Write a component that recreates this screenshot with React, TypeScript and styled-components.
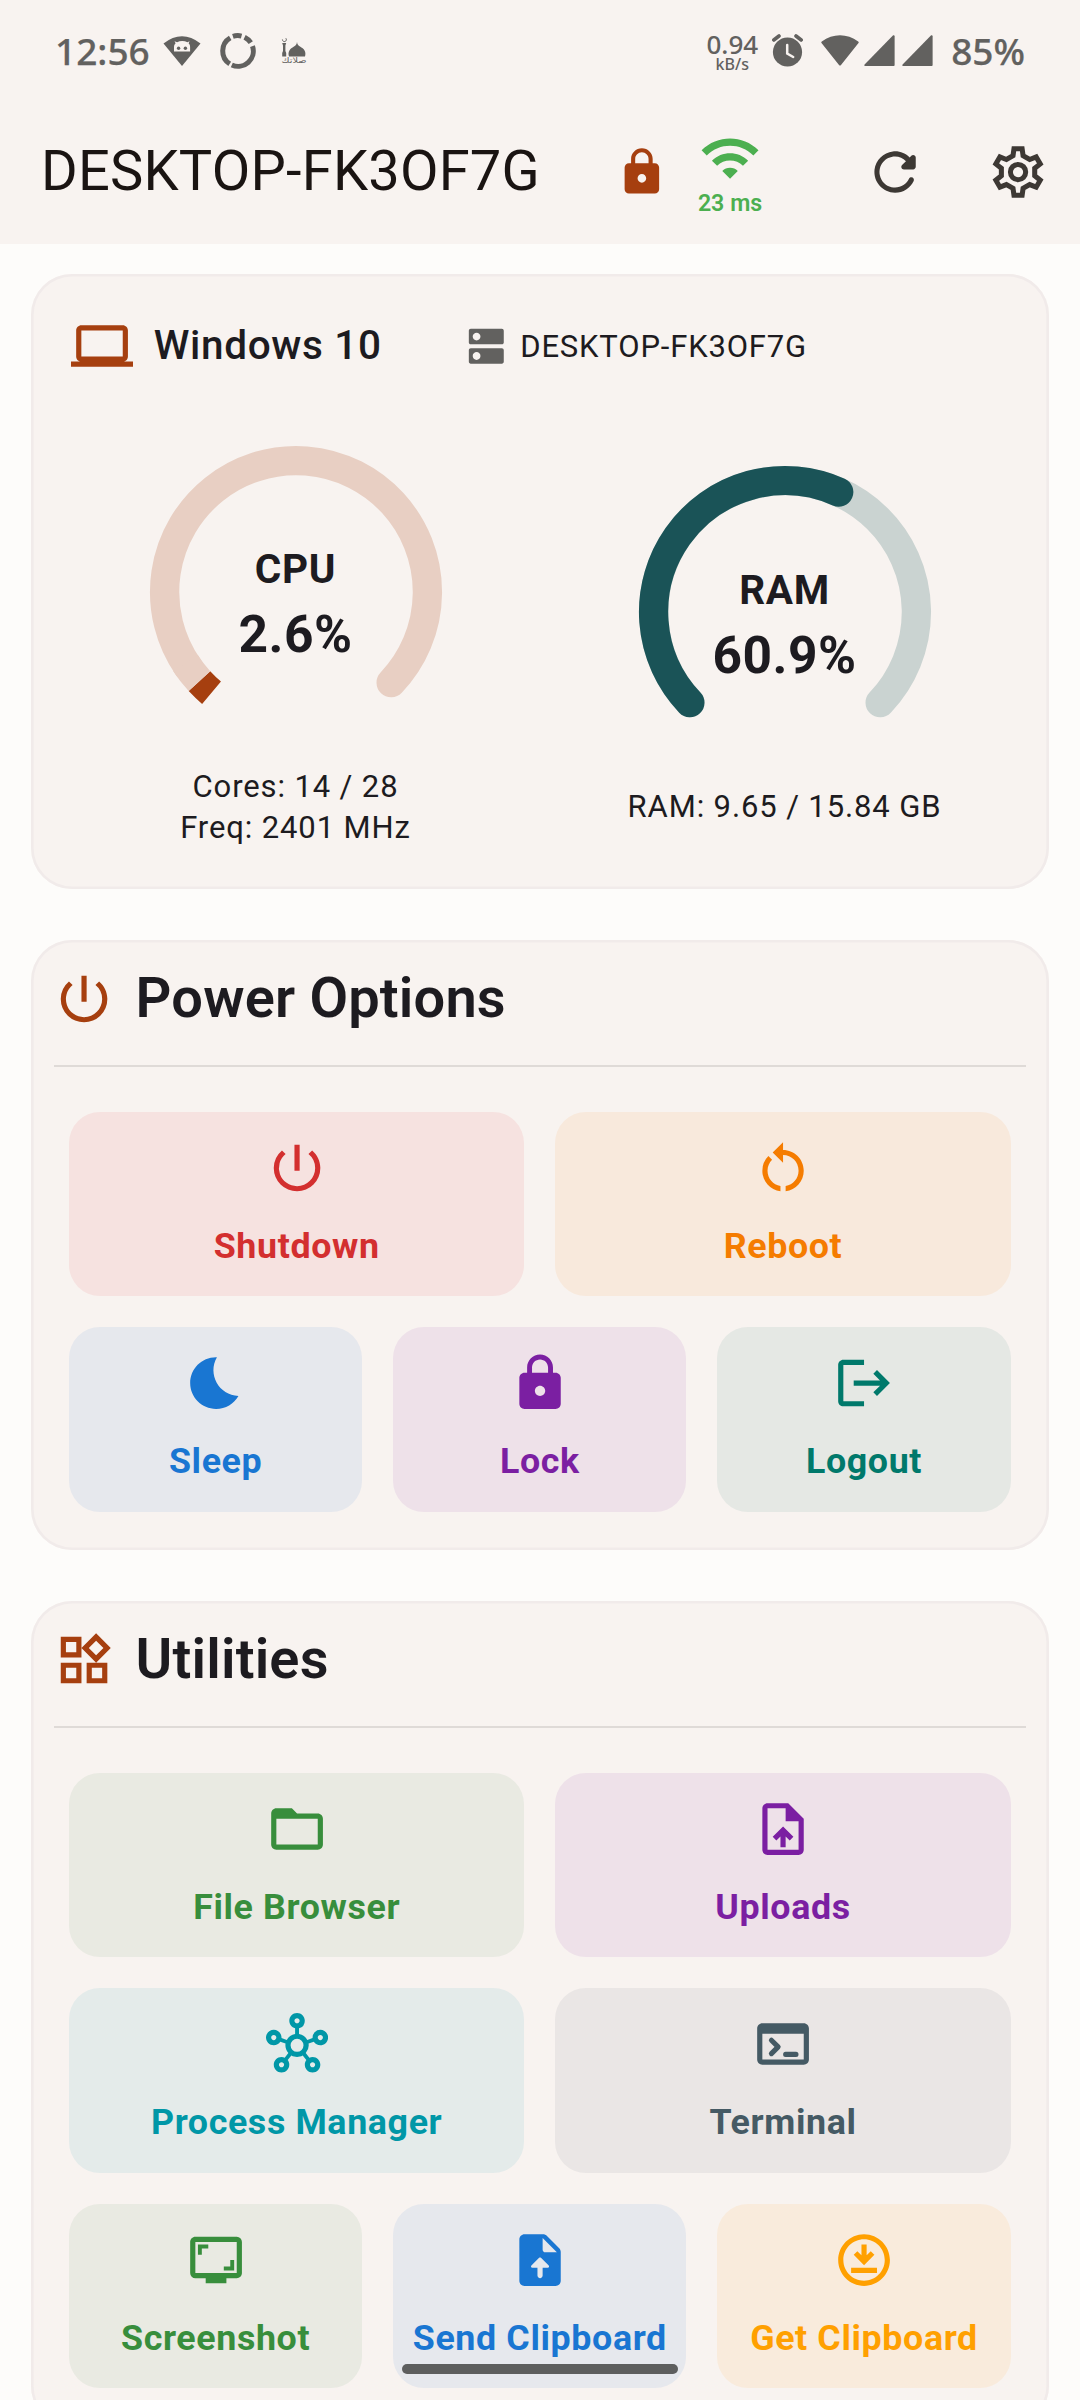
import React from "react";
import styled, { createGlobalStyle } from "styled-components";
import {
  MdBedtime,
  MdDns,
  MdFolderOpen,
  MdLaptop,
  MdLock,
  MdLogout,
  MdOutlineDownloadForOffline,
  MdOutlineHub,
  MdOutlineWidgets,
  MdPowerSettingsNew,
  MdRestartAlt,
  MdScreenshotMonitor,
  MdUploadFile,
  MdWifi,
} from "react-icons/md";

const color = {
  page: "#fdfcfa",
  surface: "#f8f3f0",
  outline: "#f1ebea",
  divider: "#dfdad7",
  text: "#1d1b20",
  title: "#1a1412",
  status: "#62615f",
  accent: "#a63f0f",
  action: "#3d3834",
  online: "#4caf50",
};

const GlobalStyle = createGlobalStyle`
  * { box-sizing: border-box; }
  html, body { margin: 0; padding: 0; background: ${color.page}; }
  body { font-family: Roboto, "Liberation Sans", sans-serif; color: ${color.text}; }
  svg { display: block; flex: none; }
`;

const Screen = styled.div`
  position: relative;
  width: 1080px;
  height: 2400px;
  overflow: hidden;
  background: ${color.page};
`;

/* ---------- status bar ---------- */

const StatusBar = styled.div`
  display: flex;
  align-items: center;
  height: 100px;
  padding: 1px 55px 0 55px;
  background: ${color.surface};
  color: ${color.status};
  font-family: "Noto Sans", Roboto, sans-serif;
`;

const StatusText = styled.span<{ $ml?: number }>`
  margin-left: ${(p) => p.$ml ?? 0}px;
  font-size: 37px;
  font-weight: 500;
  line-height: 50px;
  white-space: nowrap;
  -webkit-text-stroke: 0.25px ${color.status};
`;

const StatusIcon = styled.svg<{ $ml: number }>`
  margin-left: ${(p) => p.$ml}px;
`;

const Spacer = styled.div`
  flex: 1;
`;

const NetSpeed = styled.div`
  display: flex;
  flex-direction: column;
  align-items: center;
  padding-top: 4px;
`;

const SpeedValue = styled.span`
  font-size: 26px;
  font-weight: 500;
  line-height: 23px;
`;

const SpeedUnit = styled.span`
  font-size: 16px;
  font-weight: 500;
  line-height: 16px;
`;

/* ---------- app bar ---------- */

const AppBar = styled.header`
  display: flex;
  align-items: center;
  height: 144px;
  padding: 0 30.8px 0 41px;
  background: ${color.surface};
`;

const HostTitle = styled.h1`
  margin: 0 auto 2px 0;
  color: ${color.title};
  font-size: 56px;
  font-weight: 400;
  line-height: 66px;
  letter-spacing: 0.22px;
  white-space: nowrap;
`;

const Action = styled.div<{ $gap: number; $color: string }>`
  display: flex;
  margin-left: ${(p) => p.$gap}px;
  color: ${(p) => p.$color};
`;

const Ping = styled.div`
  display: flex;
  flex-direction: column;
  align-items: center;
  width: 64px;
  margin-left: 30px;
  color: ${color.online};
`;

const PingText = styled.span`
  font-size: 23.2px;
  font-weight: 600;
  line-height: 28px;
  white-space: nowrap;
`;

/* ---------- cards ---------- */

const Content = styled.main`
  display: flex;
  flex-direction: column;
  gap: 51.1px;
  padding: 30.4px 31px 0;
`;

const Card = styled.section<{ $height?: number }>`
  display: flex;
  flex-direction: column;
  ${(p) => (p.$height ? `height: ${p.$height}px;` : "")}
  border-radius: 41px;
  background: ${color.surface};
  box-shadow: inset 0 0 0 2.6px ${color.outline};
`;

const SystemRow = styled.div`
  display: flex;
  align-items: center;
  height: 62px;
  margin: 40.8px 40px 0;
`;

const OsName = styled.span`
  width: 309.5px;
  margin: 0 0 2px 20.7px;
  font-size: 40.5px;
  font-weight: 500;
  line-height: 52px;
  letter-spacing: 0.65px;
`;

const HostName = styled.span`
  margin-left: 10.4px;
  font-size: 31px;
  line-height: 41px;
  letter-spacing: 0.82px;
`;

const Gauges = styled.div`
  display: flex;
  align-items: center;
  margin: 64.7px 20px 0;
`;

const GaugeColumn = styled.div`
  display: flex;
  flex: 1;
  flex-direction: column;
  align-items: center;
`;

const GaugeFace = styled.div`
  display: grid;
  width: 300px;
  height: 324px;

  > * {
    grid-area: 1 / 1;
  }
`;

const GaugeLabel = styled.div`
  display: flex;
  flex-direction: column;
  align-items: center;
  padding-top: 97.4px;
`;

const GaugeName = styled.span`
  font-size: 40.5px;
  font-weight: 700;
  line-height: 60px;
  letter-spacing: 0.7px;
`;

const GaugeValue = styled.span`
  font-size: 51.5px;
  font-weight: 700;
  line-height: 71px;
  letter-spacing: 0.5px;
`;

const GaugeLine = styled.span`
  font-size: 31px;
  line-height: 41.2px;
  letter-spacing: 0.88px;
  white-space: nowrap;
`;

/* ---------- tile groups ---------- */

const GroupHeader = styled.div`
  display: flex;
  align-items: center;
  height: 124.4px;
  margin: 0 22.3px;
  padding-bottom: 6.4px;
  color: ${color.accent};
`;

const GroupTitle = styled.h2`
  margin: 0 0 3px 20.2px;
  color: ${color.text};
  font-size: 56px;
  font-weight: 600;
  line-height: 62px;
  letter-spacing: 0.17px;
`;

const Divider = styled.div`
  height: 2px;
  margin: 0 22.8px;
  background: ${color.divider};
`;

const TileRows = styled.div`
  display: flex;
  flex-direction: column;
  gap: 31px;
  padding: 45.1px 38.4px 38.4px 38px;
`;

const TileRow = styled.div`
  display: flex;
  gap: 31px;
`;

const Tile = styled.button<{ $fg: string; $bg: string }>`
  display: flex;
  flex: 1 1 0;
  flex-direction: column;
  align-items: center;
  gap: 21px;
  min-width: 0;
  height: 184.5px;
  padding: 25px 0 0;
  border: 0;
  border-radius: 31px;
  background: ${(p) => p.$bg};
  color: ${(p) => p.$fg};
  font-family: inherit;
`;

const TileLabel = styled.span`
  font-size: 35.8px;
  font-weight: 700;
  line-height: 52px;
  letter-spacing: 0.62px;
  white-space: nowrap;
`;

const HomeIndicator = styled.div`
  position: absolute;
  left: 402px;
  top: 2364px;
  width: 276px;
  height: 10px;
  border-radius: 5px;
  background: #5d5e5e;
`;

/* ---------- drawings ---------- */

const ICON = 62.1;

const RefreshIcon = () => (
  <svg width={ICON} height={ICON} viewBox="0 0 24 24" fill="currentColor">
    <path d="M17.65 6.35c-1.63-1.63-3.94-2.57-6.48-2.31-3.67.37-6.69 3.35-7.1 7.02C3.52 15.91 7.27 20 12 20c3.19 0 5.93-1.87 7.21-4.56.32-.67-.16-1.44-.9-1.44-.37 0-.72.2-.88.53-1.13 2.43-3.84 3.97-6.8 3.31-2.22-.49-4.01-2.3-4.48-4.52C5.31 9.44 8.26 6 12 6c1.66 0 3.14.69 4.22 1.78l-1.51 1.51c-.63.63-.19 1.71.7 1.71H19c.55 0 1-.45 1-1V6.41c0-.89-1.08-1.34-1.71-.71l-.64.65z" />
  </svg>
);

/* Centre line of one gear tooth, repeated six times around the hub. */
const TOOTH = [
  [-1.945, -6.315],
  [-1.57, -9],
  [1.57, -9],
  [1.945, -6.315],
];

const gearPoints = [0, 60, 120, 180, 240, 300]
  .flatMap((deg) => {
    const rad = (deg * Math.PI) / 180;
    return TOOTH.map(([x, y]) => {
      const px = 12 + x * Math.cos(rad) - y * Math.sin(rad);
      const py = 12 + x * Math.sin(rad) + y * Math.cos(rad);
      return `${px.toFixed(3)},${py.toFixed(3)}`;
    });
  })
  .join(" ");

const SettingsIcon = () => (
  <svg width={ICON} height={ICON} viewBox="0 0 24 24" fill="none" stroke="currentColor" strokeWidth="1.95">
    <polygon points={gearPoints} />
    <circle cx="12" cy="12" r="2.95" />
  </svg>
);

const TerminalIcon = ({ size }: { size: number }) => (
  <svg width={size} height={size} viewBox="0 0 24 24" fill="currentColor">
    <path d="M20 4H4c-1.11 0-2 .9-2 2v12c0 1.1.89 2 2 2h16c1.1 0 2-.9 2-2V6c0-1.1-.89-2-2-2zm0 14H4V8h16v10z" />
    <path
      d="M7.5 10.5l2.6 2.6-2.6 2.6M13 16h4"
      fill="none"
      stroke="currentColor"
      strokeWidth="1.95"
      strokeLinecap="round"
      strokeLinejoin="round"
    />
  </svg>
);

const SendFileIcon = ({ size }: { size: number }) => (
  <svg width={size} height={size} viewBox="0 0 24 24" fill="currentColor" fillRule="evenodd">
    <path d="M14.59 2.59c-.38-.38-.89-.59-1.42-.59H6c-1.1 0-2 .9-2 2v16c0 1.1.89 2 1.99 2H18c1.1 0 2-.9 2-2V8.83c0-.53-.21-1.04-.59-1.41l-4.82-4.83zM15 15h-2v3c0 .55-.45 1-1 1s-1-.45-1-1v-3H9c-.45 0-.66-.54-.35-.85l2.99-3c.2-.2.51-.2.71 0l3.01 3c.3.31.08.85-.36.85zM14 9c-.55 0-1-.45-1-1V3.500L18.500 9H14z" />
  </svg>
);

const CatWifiIcon = () => (
  <StatusIcon $ml={13} width="38" height="30" viewBox="0 0 38 30">
    <path d="M0.500 7.500Q19-7 37.500 7.500L19 30z" fill={color.status} />
    <path
      d="M11 15.500V11c0-1.800 .8-2.900 1.600-3.800L11.500 5.200l2.600 1c3-1.500 7.300-1.500 10.300 0l2.200-1-1 2c.9 .9 1.500 2 1.500 3.800v4.500z"
      fill={color.surface}
    />
    <circle cx="15.600" cy="12.300" r="1.700" fill={color.status} />
    <circle cx="22.400" cy="12.300" r="1.700" fill={color.status} />
  </StatusIcon>
);

const RingIcon = () => (
  <StatusIcon $ml={19} width="36" height="36" viewBox="0 0 36 36" fill="none" stroke={color.status} strokeWidth="5">
    <path d="M12.900 3.400A15.300 15.300 0 0 1 21.500 3.100" />
    <path d="M24.600 4.200A15.300 15.300 0 0 1 30.800 9.700" />
    <path d="M32.500 13.100A15.300 15.300 0 0 1 11.800 32" />
    <path d="M9.700 30.900A15.300 15.300 0 0 1 10.200 4.900" />
  </StatusIcon>
);

const MosqueIcon = () => (
  <StatusIcon $ml={25} width="27" height="28" viewBox="0 0 27 28" fill={color.status}>
    <path d="M8 19.500C6.500 14.500 9 11.800 13 9.500 14.800 8.500 15.600 7.600 16 5c.4 2.600 1.200 3.500 3 4.500 4 2.300 6.500 5 5 10z" />
    <path d="M1.200 19.500V16l.8-2V8.500L1.200 6h4L4.400 8.500V14l.8 2v3.500z" />
    <path d="M4.800 1.200A2 2 0 1 1 1.400 2.400" fill="none" stroke={color.status} strokeWidth=".9" />
    <text x="0.500" y="25.500" fontSize="8" fontFamily="DejaVu Sans, sans-serif" textLength="25" lengthAdjust="spacingAndGlyphs">
      صلاتك
    </text>
  </StatusIcon>
);

const AlarmIcon = () => (
  <StatusIcon $ml={14} width="31" height="33" viewBox="0 0 31 33">
    <circle cx="15.500" cy="18" r="14.600" fill={color.status} />
    <path d="M1.800 6L7 2M24 2l5.200 4" stroke={color.status} strokeWidth="3.600" strokeLinecap="round" />
    <path d="M15.200 11v8.600l6 3.400" fill="none" stroke={color.surface} strokeWidth="2.500" strokeLinecap="round" />
  </StatusIcon>
);

const WifiFullIcon = () => (
  <StatusIcon $ml={18} width="38" height="31" viewBox="0 0 38 31" fill={color.status}>
    <path d="M.8 6.500C12-1.700 26-1.700 37.200 6.500c.7 .5 .7 1 .3 1.600L20 29.900c-.6 .8-1.400 .8-2 0L.5 8.100C.1 7.500 .1 7 .8 6.500z" />
  </StatusIcon>
);

const SignalIcon = ({ ml }: { ml: number }) => (
  <StatusIcon $ml={ml} width="31" height="31" viewBox="0 0 31 31" fill={color.status}>
    <path d="M28.900 .6 .6 29.500c-.6 .8-.4 1.500 .5 1.500h28.400c.7 0 1.100-.4 1.100-1.100V1.300C30.600 .1 29.700-.2 28.900 .6z" />
  </StatusIcon>
);

/* The dial spans 280 degrees, its round caps included. */
const DIAL = { center: 150, radius: 131.4, width: 29.3, start: 130, sweep: 280, cap: 6.4 };

function arc(from: number, to: number) {
  const point = (deg: number) => {
    const rad = (deg * Math.PI) / 180;
    const x = DIAL.center + DIAL.radius * Math.cos(rad);
    const y = DIAL.center + DIAL.radius * Math.sin(rad);
    return `${x.toFixed(2)} ${y.toFixed(2)}`;
  };
  const large = to - from > 180 ? 1 : 0;
  return `M${point(from)}A${DIAL.radius} ${DIAL.radius} 0 ${large} 1 ${point(to)}`;
}

interface GaugeProps {
  name: string;
  percent: number;
  fill: string;
  track: string;
  lines: string[];
}

function Gauge({ name, percent, fill, track, lines }: GaugeProps) {
  const end = DIAL.start + (DIAL.sweep * percent) / 100;
  const isShort = end - DIAL.start < DIAL.cap * 2;
  const trackEnd = DIAL.start + DIAL.sweep - DIAL.cap;
  return (
    <GaugeColumn>
      <GaugeFace>
        <svg width="300" height="300" viewBox="0 0 300 300" fill="none" strokeWidth={DIAL.width}>
          <path d={arc(isShort ? end + 8 : DIAL.start + DIAL.cap, trackEnd)} stroke={track} strokeLinecap="round" />
          {isShort ? (
            <path d={arc(DIAL.start, end)} stroke={fill} />
          ) : (
            <path d={arc(DIAL.start + DIAL.cap, end - DIAL.cap)} stroke={fill} strokeLinecap="round" />
          )}
          {isShort && <path d={arc(end, end + 10)} stroke={track} />}
        </svg>
        <GaugeLabel>
          <GaugeName>{name}</GaugeName>
          <GaugeValue>{percent}%</GaugeValue>
        </GaugeLabel>
      </GaugeFace>
      {lines.map((line) => (
        <GaugeLine key={line}>{line}</GaugeLine>
      ))}
    </GaugeColumn>
  );
}

interface TileSpec {
  label: string;
  icon: React.ComponentType<{ size: number }>;
  fg: string;
  bg: string;
}

const red = { fg: "#d32f2f", bg: "#f6e2e0" };
const orange = { fg: "#f57c00", bg: "#f8e9dc" };
const blue = { fg: "#1976d2", bg: "#e6e8ed" };
const purple = { fg: "#7b1fa2", bg: "#eee1e9" };
const teal = { fg: "#00796b", bg: "#e5e8e4" };
const green = { fg: "#388e3c", bg: "#e9eae2" };
const cyan = { fg: "#0097a7", bg: "#e4ebea" };
const slate = { fg: "#455a64", bg: "#eae6e5" };
const amber = { fg: "#ffa000", bg: "#f9ebdc" };

const powerTiles: TileSpec[][] = [
  [
    { label: "Shutdown", icon: MdPowerSettingsNew, ...red },
    { label: "Reboot", icon: MdRestartAlt, ...orange },
  ],
  [
    { label: "Sleep", icon: MdBedtime, ...blue },
    { label: "Lock", icon: MdLock, ...purple },
    { label: "Logout", icon: MdLogout, ...teal },
  ],
];

const utilityTiles: TileSpec[][] = [
  [
    { label: "File Browser", icon: MdFolderOpen, ...green },
    { label: "Uploads", icon: MdUploadFile, ...purple },
  ],
  [
    { label: "Process Manager", icon: MdOutlineHub, ...cyan },
    { label: "Terminal", icon: TerminalIcon, ...slate },
  ],
  [
    { label: "Screenshot", icon: MdScreenshotMonitor, ...green },
    { label: "Send Clipboard", icon: SendFileIcon, ...blue },
    { label: "Get Clipboard", icon: MdOutlineDownloadForOffline, ...amber },
  ],
];

interface TileGroupProps {
  title: string;
  icon: React.ComponentType<{ size: number }>;
  rows: TileSpec[][];
}

function TileGroup({ title, icon: Icon, rows }: TileGroupProps) {
  return (
    <Card>
      <GroupHeader>
        <Icon size={ICON} />
        <GroupTitle>{title}</GroupTitle>
      </GroupHeader>
      <Divider />
      <TileRows>
        {rows.map((row) => (
          <TileRow key={row[0].label}>
            {row.map(({ label, icon: TileIcon, fg, bg }) => (
              <Tile key={label} $fg={fg} $bg={bg}>
                <TileIcon size={ICON} />
                <TileLabel>{label}</TileLabel>
              </Tile>
            ))}
          </TileRow>
        ))}
      </TileRows>
    </Card>
  );
}

export default function App() {
  return (
    <Screen>
      <GlobalStyle />
      <StatusBar>
        <StatusText>12:56</StatusText>
        <CatWifiIcon />
        <RingIcon />
        <MosqueIcon />
        <Spacer />
        <NetSpeed>
          <SpeedValue>0.94</SpeedValue>
          <SpeedUnit>kB/s</SpeedUnit>
        </NetSpeed>
        <AlarmIcon />
        <WifiFullIcon />
        <SignalIcon ml={4.5} />
        <SignalIcon ml={7} />
        <StatusText $ml={18.5}>85%</StatusText>
      </StatusBar>
      <AppBar>
        <HostTitle>DESKTOP-FK3OF7G</HostTitle>
        <Action $gap={0} $color={color.accent}>
          <MdLock size={51.75} />
        </Action>
        <Ping>
          <MdWifi size={ICON} />
          <PingText>23 ms</PingText>
        </Ping>
        <Action $gap={102.3} $color={color.action}>
          <RefreshIcon />
        </Action>
        <Action $gap={60.7} $color={color.action}>
          <SettingsIcon />
        </Action>
      </AppBar>
      <Content>
        <Card $height={614.9}>
          <SystemRow>
            <MdLaptop size={ICON} color={color.accent} />
            <OsName>Windows 10</OsName>
            <MdDns size={46.6} color="#62615f" />
            <HostName>DESKTOP-FK3OF7G</HostName>
          </SystemRow>
          <Gauges>
            <Gauge
              name="CPU"
              percent={2.6}
              fill="#a63f0f"
              track="#e8cfc3"
              lines={["Cores: 14 / 28", "Freq: 2401 MHz"]}
            />
            <Gauge name="RAM" percent={60.9} fill="#1a5357" track="#cad3d1" lines={["RAM: 9.65 / 15.84 GB"]} />
          </Gauges>
        </Card>
        <TileGroup title="Power Options" icon={MdPowerSettingsNew} rows={powerTiles} />
        <TileGroup title="Utilities" icon={MdOutlineWidgets} rows={utilityTiles} />
      </Content>
      <HomeIndicator />
    </Screen>
  );
}
